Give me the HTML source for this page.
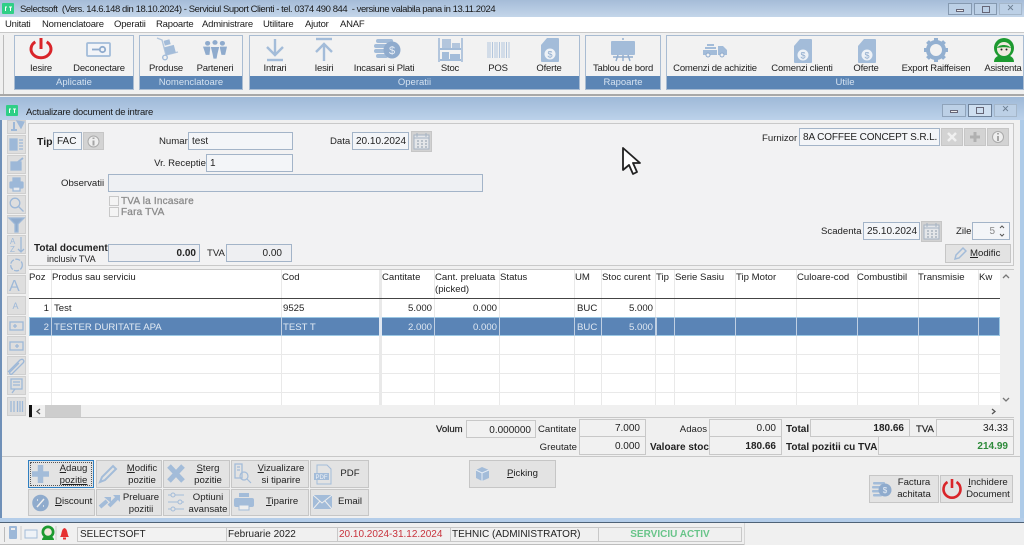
<!DOCTYPE html>
<html><head><meta charset="utf-8"><style>
html,body{margin:0;padding:0;width:1024px;height:545px;overflow:hidden;background:#f0f0f0}
#r{position:relative;width:1024px;height:545px;overflow:hidden;font:9.6px "Liberation Sans",sans-serif;color:#222;filter:blur(.35px)}
#r div,#r svg{position:absolute}
.t{white-space:nowrap;line-height:12px;margin-top:1px}
.st{margin-top:0;font-size:10px}
.k{letter-spacing:-.2px;font-size:9.5px}
.c{text-align:center}.e{text-align:right}
.b{font-weight:bold;font-size:10px}
.g{background:#f2f2f2;border:1px solid #a9bcd2;box-sizing:border-box}
.l{background:#5b85b5;color:#d5e2f0;text-align:center;line-height:14px;height:13px;left:0;right:0;bottom:0;font-size:9.5px}
.f{background:#f3f5f8;border:1px solid #a3b4c8;box-sizing:border-box;line-height:18px;padding:0 3px;white-space:nowrap;color:#222;font-size:10px}
.w{background:#f1f1f1;border:1px solid #c8c8c8;box-sizing:border-box;font-size:10px}
.btn{background:#e3e3e3;border:1px solid #c6c6c6;box-sizing:border-box}
.s{background:#dedede;border:1px solid #cfcfcf;box-sizing:border-box;left:7px;width:19px;height:19px}
.v{background:#e9e9e9;width:1px;top:270px;height:135px}
.h{background:#e9e9e9;height:1px;left:29px;width:971px}
.sv{background:#c0d0e3;width:1px;top:317px;height:19px}
.m{font-size:9.5px;letter-spacing:-.2px;color:#1a1a1a}
u{text-decoration:underline}
</style></head><body><div id="r">

<!-- main title -->
<div style="left:0;top:0;width:1024px;height:17px;background:linear-gradient(#a5bcd8,#c4d6ea)"></div>
<svg style="left:2px;top:3px" width="12" height="11"><rect width="12" height="11" rx="1" fill="#2fcf86"/><path d="M3 4h2M7 4h3M8.500 4v4M3.500 4v4" stroke="#fff" fill="none"/></svg>
<div class="t" style="left:20px;top:3px;color:#1a1a1a;font-size:9.5px;letter-spacing:-.43px">Selectsoft&nbsp; (Vers. 14.6.148 din 18.10.2024) - Serviciul Suport Clienti - tel. 0374 490 844&nbsp; - versiune valabila pana in 13.11.2024</div>
<div style="left:948px;top:3px;width:24px;height:12px;background:#bcd0e6;border:1px solid #8599b0;box-sizing:border-box"></div>
<div style="left:974px;top:3px;width:23px;height:12px;background:#bcd0e6;border:1px solid #8599b0;box-sizing:border-box"></div>
<div style="left:999px;top:3px;width:23px;height:12px;background:#bcd0e6;border:1px solid #a5b7ca;box-sizing:border-box"></div>
<div style="left:956px;top:9px;width:8px;height:3px;background:#eee;border:1px solid #667;box-sizing:border-box"></div>
<div style="left:982px;top:6px;width:8px;height:7px;border:1px solid #667;box-sizing:border-box"></div>
<div class="t c" style="left:999px;top:2px;width:23px;color:#6d7f92">✕</div>

<!-- menu -->
<div style="left:0;top:17px;width:1024px;height:15px;background:#fff"></div>
<div class="t m" style="left:5px;top:18px">Unitati</div>
<div class="t m" style="left:42px;top:18px">Nomenclatoare</div>
<div class="t m" style="left:114px;top:18px">Operatii</div>
<div class="t m" style="left:156px;top:18px">Rapoarte</div>
<div class="t m" style="left:202px;top:18px">Administrare</div>
<div class="t m" style="left:263px;top:18px">Utilitare</div>
<div class="t m" style="left:305px;top:18px">Ajutor</div>
<div class="t m" style="left:340px;top:18px">ANAF</div>

<!-- toolbar -->
<div style="left:0;top:32px;width:1024px;height:64px;background:#f0f0f0;border-top:1px solid #c8c8c8;border-bottom:2px solid #a8a8a8;box-sizing:border-box"></div>
<div style="left:3px;top:35px;width:1px;height:59px;background:#bbb"></div>
<div class="g" style="left:14px;top:35px;width:120px;height:55px"><div class="l">Aplicatie</div></div>
<div class="g" style="left:139px;top:35px;width:104px;height:55px"><div class="l">Nomenclatoare</div></div>
<div class="g" style="left:249px;top:35px;width:331px;height:55px"><div class="l">Operatii</div></div>
<div class="g" style="left:585px;top:35px;width:76px;height:55px"><div class="l">Rapoarte</div></div>
<div class="g" style="left:666px;top:35px;width:358px;height:55px"><div class="l">Utile</div></div>

<div class="t c k" style="left:21px;top:62px;width:40px">Iesire</div>
<div class="t c k" style="left:69px;top:62px;width:60px">Deconectare</div>
<div class="t c k" style="left:143px;top:62px;width:46px">Produse</div>
<div class="t c k" style="left:190px;top:62px;width:50px">Parteneri</div>
<div class="t c k" style="left:255px;top:62px;width:40px">Intrari</div>
<div class="t c k" style="left:304px;top:62px;width:40px">Iesiri</div>
<div class="t c k" style="left:344px;top:62px;width:80px">Incasari si Plati</div>
<div class="t c k" style="left:430px;top:62px;width:40px">Stoc</div>
<div class="t c k" style="left:478px;top:62px;width:40px">POS</div>
<div class="t c k" style="left:529px;top:62px;width:40px">Oferte</div>
<div class="t c k" style="left:588px;top:62px;width:70px">Tablou de bord</div>
<div class="t c k" style="left:665px;top:62px;width:100px">Comenzi de achizitie</div>
<div class="t c k" style="left:762px;top:62px;width:80px">Comenzi clienti</div>
<div class="t c k" style="left:846px;top:62px;width:40px">Oferte</div>
<div class="t c k" style="left:891px;top:62px;width:90px">Export Raiffeisen</div>
<div class="t c k" style="left:978px;top:62px;width:50px">Asistenta</div>

<!-- power -->
<svg style="left:28px;top:36px" width="26" height="26"><path d="M7.300 5.900A10 8.700 0 1 0 18.700 5.900" fill="none" stroke="#d9252a" stroke-width="3"/><path d="M13 2V13" stroke="#d9252a" stroke-width="3"/></svg>
<!-- deconectare -->
<svg style="left:86px;top:40px" width="26" height="18"><rect x="1" y="3" width="23" height="13" rx="1" fill="#f2f4f8" stroke="#a3bcd9" stroke-width="1.800"/><circle cx="16.500" cy="9.500" r="2.700" fill="none" stroke="#8fabcd" stroke-width="1.800"/><path d="M6 9.500h8" stroke="#8fabcd" stroke-width="1.800"/></svg>
<!-- produse -->
<svg style="left:154px;top:37px" width="26" height="25"><path d="M3 1l5 2 4 15 12-3" fill="none" stroke="#b3c6dd" stroke-width="1.400"/><circle cx="11" cy="20.500" r="2.300" fill="none" stroke="#a3bcd9" stroke-width="1.400"/><rect x="11" y="9" width="10" height="8" transform="rotate(-15 16 13)" fill="#a3bcd9"/><rect x="10" y="3" width="6" height="5" transform="rotate(-15 13 5)" fill="#a3bcd9"/></svg>
<!-- parteneri -->
<svg style="left:203px;top:40px" width="24" height="19" viewBox="0 0 26 23" preserveAspectRatio="none" fill="#8fabcd"><circle cx="5" cy="4" r="2.800"/><circle cx="13" cy="3" r="2.800"/><circle cx="21" cy="4" r="2.800"/><path d="M0 8h8l-1 10H3z"/><path d="M18 8h8l-2 10h-4z"/><path d="M8 8h10l-2 9-1 6h-4l-1-6z" stroke="#f2f2f2" stroke-width=".8"/></svg>
<!-- intrari -->
<svg style="left:264px;top:38px" width="22" height="25" fill="none" stroke="#a3bcd9" stroke-width="2.400"><path d="M11 1v15M3 9l8 8 8-8"/><path d="M3 22h16"/></svg>
<!-- iesiri -->
<svg style="left:313px;top:37px" width="22" height="25" fill="none" stroke="#a3bcd9" stroke-width="2.400"><path d="M3 2h16"/><path d="M11 24V8M3 15l8-8 8 8"/></svg>
<!-- incasari -->
<svg style="left:374px;top:38px" width="28" height="23"><g fill="#a3bcd9"><rect x="2" y="1" width="17" height="4" rx="2"/><rect x="0" y="6" width="14" height="4" rx="2"/><rect x="0" y="11" width="12" height="4" rx="2"/><rect x="2" y="16" width="12" height="4" rx="2"/><circle cx="18" cy="12" r="8.500" fill="#8fabcd"/></g><text x="18" y="16" font-size="11" text-anchor="middle" fill="#e9eff6" font-family="Liberation Sans">$</text></svg>
<!-- stoc -->
<svg style="left:438px;top:38px" width="25" height="24"><path d="M1 0v24M24 0v24" stroke="#b3c6dd" stroke-width="2"/><rect x="2" y="10" width="21" height="2" fill="#a3bcd9"/><rect x="2" y="21" width="21" height="2" fill="#a3bcd9"/><rect x="4" y="1" width="9" height="9" fill="#b3c6dd"/><rect x="14" y="5" width="8" height="5" fill="#b3c6dd"/><rect x="4" y="14" width="7" height="7" fill="#a3bcd9"/><rect x="12" y="16" width="10" height="5" fill="#a3bcd9"/></svg>
<!-- pos -->
<svg style="left:487px;top:42px" width="24" height="16" stroke="#b3c6dd"><path d="M1 0v16M3 0v16M5.500 0v16M8 0v16M10 0v16M12.500 0v16M15 0v16M17 0v16M19.500 0v16M22 0v16"/></svg>
<!-- oferte -->
<svg style="left:540px;top:37px" width="20" height="26"><path d="M7 1h11a1 1 0 0 1 1 1v22a1 1 0 0 1-1 1H2a1 1 0 0 1-1-1V8z" fill="#a3bcd9"/><circle cx="10" cy="17" r="5.500" fill="#eef2f7"/><text x="10" y="20.500" font-size="9" text-anchor="middle" fill="#8fabcd" font-family="Liberation Sans">$</text></svg>
<!-- tablou -->
<svg style="left:610px;top:37px" width="26" height="25"><rect x="1" y="4" width="24" height="14" rx="1" fill="#a3bcd9"/><path d="M13 1v2M13 18v6M8 18l-2 6M18 18l2 6M3 20h20" stroke="#8fabcd" stroke-width="1.400"/></svg>
<!-- truck -->
<svg style="left:702px;top:42px" width="26" height="16"><path d="M1 8h14v5H1zM16 4h5l4 4v5h-9z" fill="#a3bcd9"/><rect x="5" y="2" width="7" height="2" fill="#a3bcd9"/><rect x="3" y="5" width="11" height="2" fill="#a3bcd9"/><circle cx="6" cy="13" r="2" fill="#f2f2f2" stroke="#8fabcd"/><circle cx="20" cy="13" r="2" fill="#f2f2f2" stroke="#8fabcd"/></svg>
<!-- comenzi clienti -->
<svg style="left:793px;top:38px" width="20" height="26"><path d="M7 1h11a1 1 0 0 1 1 1v22a1 1 0 0 1-1 1H2a1 1 0 0 1-1-1V8z" fill="#a3bcd9"/><circle cx="10" cy="17" r="5.500" fill="#eef2f7"/><text x="10" y="20.500" font-size="9" text-anchor="middle" fill="#8fabcd" font-family="Liberation Sans">$</text></svg>
<svg style="left:857px;top:38px" width="20" height="26"><path d="M7 1h11a1 1 0 0 1 1 1v22a1 1 0 0 1-1 1H2a1 1 0 0 1-1-1V8z" fill="#a3bcd9"/><circle cx="10" cy="17" r="5.500" fill="#eef2f7"/><text x="10" y="20.500" font-size="9" text-anchor="middle" fill="#8fabcd" font-family="Liberation Sans">$</text></svg>
<!-- gear -->
<svg style="left:923px;top:37px" width="26" height="26" fill="none" stroke="#93b0d1"><circle cx="13" cy="13" r="8" stroke-width="4"/><path d="M13 1v3M13 22v3M1 13h3M22 13h3M4.500 4.500l2.200 2.200M19.300 19.300l2.200 2.200M21.500 4.500l-2.200 2.200M6.700 19.300l-2.200 2.200" stroke-width="4"/></svg>
<!-- asistenta -->
<svg style="left:991px;top:37px" width="26" height="26"><path d="M3 25c0-5 4-7 10-7s10 2 10 7z" fill="#1d9a30"/><circle cx="13" cy="11" r="10" fill="#1d9a30"/><circle cx="13" cy="12" r="7" fill="#f1e9de"/><path d="M6 11c2-4 11-4 14 0-4-1-9-1-14 0z" fill="#1d9a30"/><circle cx="10.500" cy="12.500" r="1" fill="#222"/><circle cx="15.500" cy="12.500" r="1" fill="#222"/></svg>

<!-- background and child window -->
<div style="left:0;top:96px;width:1024px;height:449px;background:#f0f0f0"></div>
<div style="left:0;top:97px;width:1024px;height:426px;background:#b4cde9"></div>
<div style="left:0;top:97px;width:1024px;height:23px;background:linear-gradient(#9fb9d8,#bcd2ea)"></div>
<svg style="left:6px;top:105px" width="12" height="11"><rect width="12" height="11" rx="1" fill="#2fcf86"/><path d="M3 4h2M7 4h3M8.500 4v4M3.500 4v4" stroke="#fff" fill="none"/></svg>
<div class="t" style="left:26px;top:106px;color:#1a1a1a;font-size:9.5px;letter-spacing:-.23px">Actualizare document de intrare</div>
<div style="left:942px;top:104px;width:24px;height:13px;background:#bcd0e6;border:1px solid #8fa3ba;box-sizing:border-box"></div>
<div style="left:968px;top:104px;width:24px;height:13px;background:#cfdff0;border:1px solid #6d8098;box-sizing:border-box"></div>
<div style="left:994px;top:104px;width:23px;height:13px;background:#bcd0e6;border:1px solid #a5b7ca;box-sizing:border-box"></div>
<div style="left:950px;top:110px;width:8px;height:3px;background:#eee;border:1px solid #667;box-sizing:border-box"></div>
<div style="left:976px;top:107px;width:8px;height:7px;border:1px solid #667;box-sizing:border-box"></div>
<div class="t c" style="left:994px;top:103px;width:23px;color:#6d7f92">✕</div>

<!-- client area -->
<div style="left:2px;top:120px;width:1018px;height:398px;background:#f0f0f0"></div>
<div style="left:28px;top:123px;width:986px;height:143px;background:#f2f2f3;border:1px solid #c9c9c9;box-sizing:border-box"></div>
<div style="left:1020px;top:120px;width:4px;height:403px;background:#aecbe8"></div>

<!-- sidebar -->
<div class="s" style="top:120px;height:14px"></div>
<div class="s" style="top:135px"></div><div class="s" style="top:155px"></div><div class="s" style="top:175px"></div><div class="s" style="top:195px"></div><div class="s" style="top:215px"></div><div class="s" style="top:235px"></div><div class="s" style="top:255px"></div><div class="s" style="top:275px"></div><div class="s" style="top:296px"></div><div class="s" style="top:316px"></div><div class="s" style="top:336px"></div><div class="s" style="top:356px"></div><div class="s" style="top:376px"></div><div class="s" style="top:397px"></div>
<svg style="left:7px;top:120px" width="19" height="297" fill="none" stroke="#9db8d8" stroke-width="1.300">
<g transform="translate(0,-8)"><path d="M4 18h6M7 10v8" stroke-width="2"/><path d="M10 9l7 1-3 6z" fill="#9db8d8"/></g>
<g transform="translate(0,15)"><rect x="3" y="4" width="7" height="11" fill="#9db8d8"/><path d="M12 5h4M12 8h4M12 11h4M12 14h4"/></g>
<g transform="translate(0,35)"><rect x="4" y="7" width="10" height="8" fill="#9db8d8"/><path d="M11 7l5-4" stroke-width="2"/></g>
<g transform="translate(0,55)"><rect x="6" y="3" width="7" height="4" fill="#9db8d8"/><rect x="3" y="7" width="13" height="6" rx="1" fill="#9db8d8"/><rect x="6" y="12" width="7" height="4" fill="#e6e9ee"/></g>
<g transform="translate(0,75)"><circle cx="8" cy="8" r="4.800"/><path d="M11.500 11.500l5 5"/></g>
<g transform="translate(0,95)"><path d="M2 3h15l-6 6v8h-3V9z" fill="#8fabcd"/></g>
<g transform="translate(0,115)"><text x="3" y="9" font-size="8" fill="#9db8d8" stroke="none" font-family="Liberation Sans">A</text><text x="3" y="17" font-size="8" fill="#9db8d8" stroke="none" font-family="Liberation Sans">Z</text><path d="M14 2v15M11 14l3 3 3-3"/></g>
<g transform="translate(0,135)"><circle cx="9.500" cy="10" r="5.800" stroke-dasharray="5 1.500"/></g>
<g transform="translate(0,155)"><text x="2" y="16" font-size="16" fill="#9db8d8" stroke="none" font-family="Liberation Sans">A</text></g>
<g transform="translate(0,176)"><text x="5.500" y="13" font-size="9" fill="#9db8d8" stroke="none" font-family="Liberation Sans">A</text></g>
<g transform="translate(0,196)"><rect x="3" y="6" width="13" height="8"/><path d="M6 10h4M8 8v4"/></g>
<g transform="translate(0,216)"><rect x="3" y="6" width="13" height="8"/><path d="M8 10h4M10 8v4"/></g>
<g transform="translate(0,236)"><path d="M1 16L13 4c3-2 5 1 3 3L5 18c-2 1-3-1-2-2L12 7"/></g>
<g transform="translate(0,256)"><rect x="4" y="3" width="11" height="10"/><path d="M6 6h7M6 9h7M8 13l-3 4"/></g>
<g transform="translate(0,277)"><path d="M4 4v11M7 4v11M10.500 4v11M13 4v11M15.500 4v11"/></g>
</svg>

<!-- form -->
<div class="t b" style="left:37px;top:135px;font-size:10.500px">Tip</div>
<div class="f" style="left:53px;top:132px;width:29px;height:18px">FAC</div>
<div class="btn" style="left:83px;top:132px;width:21px;height:18px;background:#d3d3d3"></div>
<svg style="left:87px;top:135px" width="13" height="13"><circle cx="6.500" cy="6.500" r="5.500" fill="#eee" stroke="#aaa"/><path d="M6.500 5.500v5M6.500 2.500v1.500" stroke="#a5a5a5" stroke-width="2"/></svg>
<div class="t" style="left:159px;top:135px">Numar</div>
<div class="f" style="left:188px;top:132px;width:105px;height:18px">test</div>
<div class="t" style="left:330px;top:135px">Data</div>
<div class="f" style="left:352px;top:132px;width:57px;height:18px">20.10.2024</div>
<div class="btn" style="left:411px;top:131px;width:21px;height:21px;background:#d2d2d2"></div>
<svg style="left:413px;top:133px" width="17" height="17" fill="none" stroke="#a5b3c2"><rect x="1" y="2" width="15" height="14" fill="#e4e6e9"/><path d="M4 0v4M13 0v4M1 5h15"/><path d="M4 8h2M8 8h2M12 8h2M4 11h2M8 11h2M12 11h2M4 14h2M8 14h2M12 14h2" stroke="#8d9aa9"/></svg>

<div class="t e" style="left:140px;top:157px;width:66px">Vr. Receptie</div>
<div class="f" style="left:206px;top:154px;width:87px;height:18px">1</div>
<div class="t" style="left:61px;top:177px">Observatii</div>
<div class="f" style="left:108px;top:174px;width:375px;height:18px;background:#eef0f3"></div>
<div style="left:109px;top:196px;width:8px;height:8px;background:#f4f4f4;border:1px solid #c8c8c8"></div>
<div style="left:109px;top:207px;width:8px;height:8px;background:#f4f4f4;border:1px solid #c8c8c8"></div>
<div class="t" style="left:121px;top:195px;color:#8c8c8c;-webkit-text-stroke:.3px #8c8c8c;letter-spacing:.2px;font-size:10px">TVA la Incasare</div>
<div class="t" style="left:121px;top:206px;color:#8c8c8c;-webkit-text-stroke:.3px #8c8c8c;letter-spacing:.2px;font-size:10px">Fara TVA</div>
<div class="t b" style="left:34px;top:242px">Total document</div>
<div class="t" style="left:47px;top:252px;font-size:9px">inclusiv TVA</div>
<div class="f b e" style="left:108px;top:244px;width:92px;height:18px;background:#eeeff2">0.00</div>
<div class="t" style="left:207px;top:247px">TVA</div>
<div class="f e" style="left:226px;top:244px;width:66px;height:18px;padding-right:9px;background:#eeeff2">0.00</div>

<div class="t" style="left:762px;top:132px">Furnizor</div>
<div class="f" style="left:799px;top:128px;width:141px;height:18px;letter-spacing:-.12px;overflow:hidden">8A COFFEE CONCEPT S.R.L.</div>
<div class="btn" style="left:941px;top:128px;width:22px;height:18px;background:#d3d3d3"></div>
<div class="btn" style="left:964px;top:128px;width:22px;height:18px;background:#d3d3d3"></div>
<div class="btn" style="left:987px;top:128px;width:22px;height:18px;background:#d3d3d3"></div>
<svg style="left:941px;top:128px" width="68" height="18"><path d="M7 5l8 8M15 5l-8 8" stroke="#f0f0f0" stroke-width="2.500"/><path d="M34 4v10M29 9h10" stroke="#b0b0b0" stroke-width="3"/><circle cx="57" cy="9" r="5.500" fill="#eee" stroke="#aaa"/><path d="M57 8v5M57 5v1.500" stroke="#a5a5a5" stroke-width="2"/></svg>
<div class="t" style="left:821px;top:225px">Scadenta</div>
<div class="f" style="left:863px;top:222px;width:57px;height:18px">25.10.2024</div>
<div class="btn" style="left:921px;top:221px;width:21px;height:21px;background:#d2d2d2"></div>
<svg style="left:923px;top:223px" width="17" height="17" fill="none" stroke="#a5b3c2"><rect x="1" y="2" width="15" height="14" fill="#e4e6e9"/><path d="M4 0v4M13 0v4M1 5h15"/><path d="M4 8h2M8 8h2M12 8h2M4 11h2M8 11h2M12 11h2M4 14h2M8 14h2M12 14h2" stroke="#8d9aa9"/></svg>
<div class="t" style="left:956px;top:225px">Zile</div>
<div class="f e" style="left:972px;top:222px;width:38px;height:18px;padding-right:14px;color:#888">5</div>
<svg style="left:998px;top:224px" width="9" height="14" fill="none" stroke="#555"><path d="M2 4l2-2 2 2M2 10l2 2 2-2"/></svg>
<div class="btn" style="left:945px;top:244px;width:66px;height:19px"></div>
<svg style="left:953px;top:246px" width="14" height="15" fill="none" stroke="#a3bcd9" stroke-width="1.500"><path d="M2 13l1-4 7-7 3 3-7 7z"/></svg>
<div class="t" style="left:970px;top:247px"><u>M</u>odific</div>

<!-- grid -->
<div style="left:29px;top:270px;width:971px;height:135px;background:#fff"></div>
<div style="left:29px;top:269px;width:985px;height:1px;background:#c8c8c8"></div>
<div style="left:1000px;top:270px;width:14px;height:147px;background:#f0f0f0"></div>
<div style="left:29px;top:405px;width:985px;height:13px;background:#f0f0f0;border-bottom:1px solid #c8c8c8;box-sizing:border-box"></div>
<div class="v" style="left:51px"></div><div class="v" style="left:281px"></div><div class="v" style="left:379px;width:3px"></div><div class="v" style="left:434px"></div><div class="v" style="left:499px"></div><div class="v" style="left:574px"></div><div class="v" style="left:601px"></div><div class="v" style="left:655px"></div><div class="v" style="left:674px"></div><div class="v" style="left:735px"></div><div class="v" style="left:796px"></div><div class="v" style="left:857px"></div><div class="v" style="left:918px"></div><div class="v" style="left:978px"></div>
<div style="left:29px;top:298px;width:971px;height:1px;background:#444"></div>
<div class="h" style="top:354px"></div><div class="h" style="top:373px"></div><div class="h" style="top:392px"></div>
<div style="left:29px;top:317px;width:971px;height:19px;background:#5a84b6;border:1px solid #9cc8e4;box-sizing:border-box"></div>
<div class="sv" style="left:51px"></div><div class="sv" style="left:281px"></div><div class="sv" style="left:379px;width:3px;background:#dfe7f1"></div><div class="sv" style="left:434px"></div><div class="sv" style="left:499px"></div><div class="sv" style="left:574px"></div><div class="sv" style="left:601px"></div><div class="sv" style="left:655px;width:2px"></div><div class="sv" style="left:674px"></div><div class="sv" style="left:735px"></div><div class="sv" style="left:796px"></div><div class="sv" style="left:857px"></div><div class="sv" style="left:918px"></div><div class="sv" style="left:978px"></div>

<div class="t" style="left:29px;top:271px">Poz</div>
<div class="t" style="left:52px;top:271px">Produs sau serviciu</div>
<div class="t" style="left:282px;top:271px">Cod</div>
<div class="t" style="left:382px;top:271px">Cantitate</div>
<div class="t" style="left:435px;top:271px">Cant. preluata</div>
<div class="t" style="left:435px;top:283px">(picked)</div>
<div class="t" style="left:500px;top:271px">Status</div>
<div class="t" style="left:575px;top:271px">UM</div>
<div class="t" style="left:602px;top:271px">Stoc curent</div>
<div class="t" style="left:656px;top:271px">Tip</div>
<div class="t" style="left:675px;top:271px">Serie Sasiu</div>
<div class="t" style="left:736px;top:271px">Tip Motor</div>
<div class="t" style="left:797px;top:271px">Culoare-cod</div>
<div class="t" style="left:857px;top:271px">Combustibil</div>
<div class="t" style="left:918px;top:271px">Transmisie</div>
<div class="t" style="left:979px;top:271px">Kw</div>

<div class="t e" style="left:29px;top:302px;width:20px">1</div>
<div class="t" style="left:54px;top:302px">Test</div>
<div class="t" style="left:283px;top:302px">9525</div>
<div class="t e" style="left:382px;top:302px;width:50px">5.000</div>
<div class="t e" style="left:435px;top:302px;width:62px">0.000</div>
<div class="t" style="left:577px;top:302px">BUC</div>
<div class="t e" style="left:602px;top:302px;width:51px">5.000</div>

<div class="t e" style="left:29px;top:321px;width:20px;color:#dfe7f1">2</div>
<div class="t" style="left:54px;top:321px;color:#e3ebf4">TESTER DURITATE APA</div>
<div class="t" style="left:283px;top:321px;color:#e3ebf4">TEST T</div>
<div class="t e" style="left:382px;top:321px;width:50px;color:#dfe7f1">2.000</div>
<div class="t e" style="left:435px;top:321px;width:62px;color:#dfe7f1">0.000</div>
<div class="t" style="left:577px;top:321px;color:#dfe7f1">BUC</div>
<div class="t e" style="left:602px;top:321px;width:51px;color:#dfe7f1">5.000</div>

<div style="left:29px;top:405px;width:3px;height:12px;background:#111"></div>
<div style="left:45px;top:405px;width:36px;height:12px;background:#cdcdcd"></div>
<svg style="left:0;top:0" width="1024" height="545" fill="none" stroke="#555" stroke-width="1.300"><path d="M40 409l-3 2.500 3 2.500M992 409l3 2.500-3 2.500"/><path d="M1003 278l3-3 3 3M1003 398l3 3 3-3" stroke="#777"/></svg>

<!-- totals -->
<div class="t" style="left:436px;top:423px;-webkit-text-stroke:.2px #222">Volum</div>
<div class="w e" style="left:466px;top:420px;width:70px;height:18px;line-height:19px;padding-right:4px">0.000000</div>
<div class="t" style="left:538px;top:423px">Cantitate</div>
<div class="t e" style="left:530px;top:441px;width:47px">Greutate</div>
<div class="w e" style="left:579px;top:419px;width:67px;height:18px;line-height:18px;padding-right:5px">7.000</div>
<div class="w e" style="left:579px;top:436px;width:67px;height:19px;line-height:19px;padding-right:5px">0.000</div>
<div class="t e" style="left:670px;top:423px;width:37px">Adaos</div>
<div class="t b" style="left:650px;top:441px">Valoare stoc</div>
<div class="w e" style="left:709px;top:419px;width:73px;height:18px;line-height:18px;padding-right:5px">0.00</div>
<div class="w e b" style="left:709px;top:436px;width:73px;height:19px;line-height:19px;padding-right:5px">180.66</div>
<div class="t b" style="left:786px;top:423px">Total</div>
<div class="w e b" style="left:810px;top:419px;width:100px;height:18px;line-height:18px;padding-right:5px">180.66</div>
<div class="t" style="left:916px;top:423px;-webkit-text-stroke:.2px #222">TVA</div>
<div class="w e" style="left:936px;top:419px;width:78px;height:18px;line-height:18px;padding-right:5px">34.33</div>
<div class="t b" style="left:786px;top:441px">Total pozitii cu TVA</div>
<div class="w e b" style="left:878px;top:436px;width:136px;height:19px;line-height:19px;padding-right:5px;color:#2d8a3a">214.99</div>
<div style="left:2px;top:456px;width:1018px;height:1px;background:#c8c8c8"></div>

<!-- buttons -->
<div class="btn" style="left:28px;top:460px;width:66px;height:28px;border:1px solid #2f7fc1"></div>
<div style="left:30px;top:462px;width:62px;height:24px;border:1px dotted #555;box-sizing:border-box"></div>
<div class="btn" style="left:96px;top:460px;width:66px;height:28px"></div>
<div class="btn" style="left:163px;top:460px;width:67px;height:28px"></div>
<div class="btn" style="left:231px;top:460px;width:78px;height:28px"></div>
<div class="btn" style="left:310px;top:460px;width:59px;height:28px"></div>
<div class="btn" style="left:28px;top:489px;width:67px;height:27px"></div>
<div class="btn" style="left:96px;top:489px;width:66px;height:27px"></div>
<div class="btn" style="left:163px;top:489px;width:67px;height:27px"></div>
<div class="btn" style="left:231px;top:489px;width:78px;height:27px"></div>
<div class="btn" style="left:310px;top:489px;width:59px;height:27px"></div>
<div class="btn" style="left:469px;top:460px;width:87px;height:28px"></div>
<div class="btn" style="left:869px;top:475px;width:70px;height:28px"></div>
<div class="btn" style="left:940px;top:475px;width:73px;height:28px"></div>

<div class="t c" style="left:55px;top:462px;width:37px;line-height:11.500px"><u>A</u>daug<br><u>pozitie</u></div>
<div class="t c" style="left:120px;top:462px;width:44px;line-height:11.500px"><u>M</u>odific<br>pozitie</div>
<div class="t c" style="left:186px;top:462px;width:44px;line-height:11.500px"><u>S</u>terg<br>pozitie</div>
<div class="t c" style="left:253px;top:462px;width:56px;line-height:11.500px"><u>V</u>izualizare<br>si tiparire</div>
<div class="t c" style="left:335px;top:467px;width:30px">PDF</div>
<div class="t" style="left:55px;top:495px"><u>D</u>iscount</div>
<div class="t c" style="left:117px;top:491px;width:48px;line-height:11.500px">Preluare<br>pozitii</div>
<div class="t c" style="left:186px;top:491px;width:44px;line-height:11.500px">Optiuni<br>avansate</div>
<div class="t" style="left:266px;top:495px"><u>T</u>iparire</div>
<div class="t" style="left:338px;top:495px">Email</div>
<div class="t" style="left:507px;top:467px"><u>P</u>icking</div>
<div class="t c" style="left:889px;top:476px;width:50px;line-height:11.500px">Factura<br>achitata</div>
<div class="t c" style="left:963px;top:476px;width:50px;line-height:11.500px"><u>I</u>nchidere<br>Document</div>

<svg style="left:30px;top:462px" width="340" height="54" fill="none" stroke="#a3bcd9">
<path d="M10.500 3v18M2 12h17" stroke-width="5.500"/>
<path d="M70 20l2-5 11-11 3 3-11 11z" stroke-width="2"/>
<path d="M139 4l14 15M153 4l-14 15" stroke-width="5"/>
<path d="M205 2h7v14h-7zM207 5h3M207 8h3" stroke-width="1.300"/><circle cx="214" cy="14" r="4" stroke-width="1.200"/><path d="M217 17l4 4" stroke-width="1.200"/>
<path d="M287 3h10l4 4v15h-14z" stroke-width="1"/><rect x="284" y="11" width="15" height="7" fill="#a3bcd9" stroke="none"/><text x="291.500" y="17" font-size="6" text-anchor="middle" fill="#f0f3f7" stroke="none" font-family="Liberation Sans">PDF</text>
<circle cx="10.500" cy="41" r="6.500" fill="#8fabcd" stroke="#8fabcd" stroke-width="3.500"/><path d="M7 45l7-8M7 38h1M13 44h1" stroke="#eee" stroke-width="1.500"/>
<path d="M70 45l7-6M79 44l8-8" stroke-width="4"/><path d="M74 35h7v6zM83 33h7v7z" fill="#a3bcd9" stroke="none"/>
<path d="M138 33h16M138 40h16M138 47h16" stroke-width="1"/><circle cx="143" cy="33" r="2" fill="#e3e3e3" stroke-width="1"/><circle cx="150" cy="40" r="2" fill="#e3e3e3" stroke-width="1"/><circle cx="143" cy="47" r="2" fill="#e3e3e3" stroke-width="1"/>
<rect x="209" y="31" width="10" height="4" fill="#a3bcd9" stroke="none"/><rect x="204" y="36" width="20" height="9" rx="2" fill="#a3bcd9" stroke="none"/><rect x="209" y="43" width="10" height="5" fill="#eee"/>
<rect x="283" y="33" width="19" height="14" fill="#a3bcd9" stroke="none"/><path d="M283 33l9 8 10-8M283 47l7-8M302 47l-7-8" stroke="#eee"/>
</svg>
<svg style="left:474px;top:465px" width="18" height="18"><path d="M8 2l7 3v8l-7 3-6-3V5z" fill="#a3bcd9"/><path d="M2 5l6 3 7-3M8 8v8" stroke="#e6edf5" fill="none"/></svg>
<svg style="left:872px;top:481px" width="20" height="17"><g fill="#a3bcd9"><rect x="1" y="1" width="12" height="2.500" rx="1"/><rect x="0" y="5" width="10" height="2.500" rx="1"/><rect x="0" y="9" width="9" height="2.500" rx="1"/><rect x="1" y="13" width="9" height="2.500" rx="1"/><circle cx="13" cy="9" r="6.500" fill="#8fabcd"/></g><text x="13" y="12" font-size="8" text-anchor="middle" fill="#e9eff6" font-family="Liberation Sans">$</text></svg>
<svg style="left:941px;top:476px" width="22" height="24"><path d="M6.500 6A8.500 8.500 0 1 0 15.500 6" fill="none" stroke="#d9252a" stroke-width="2.600"/><path d="M11 3v9" stroke="#d9252a" stroke-width="2.600"/></svg>

<!-- blue bottom -->
<div style="left:0;top:518px;width:1024px;height:5px;background:#b4cde9;border-bottom:1px solid #4e6277;box-sizing:border-box"></div>
<div style="left:0;top:120px;width:2px;height:398px;background:#6f90b8"></div>

<!-- status bar -->
<div style="left:4px;top:527px;width:1px;height:15px;background:#bbb"></div>
<svg style="left:8px;top:525px" width="68" height="16"><rect x="1" y="1" width="8" height="13" rx="1" fill="#9db8d8"/><rect x="3" y="3" width="4" height="2" fill="#eee"/><rect x="17" y="5" width="12" height="8" fill="#eef2f7" stroke="#a3bcd9"/><circle cx="40" cy="7" r="6.500" fill="#1d9a30"/><path d="M34 15c0-3 3-4 6-4s6 1 6 4z" fill="#1d9a30"/><circle cx="40" cy="7" r="3.800" fill="#f1e9de"/><path d="M52 12c2-2 1-8 4.500-9 3.500 1 2.500 7 4.500 9z" fill="#e63030"/><rect x="55" y="12.500" width="3" height="2" fill="#e63030"/><path d="M13 1v14M48 1v14" stroke="#ccc"/></svg>
<div class="t st" style="left:77px;top:527px;width:147px;height:13px;border:1px solid #c8c8c8;border-width:1px 0 1px 1px;padding-left:2px;line-height:13px;background:#f2f2f2">SELECTSOFT</div>
<div class="t st" style="left:226px;top:527px;width:110px;height:13px;border:1px solid #c8c8c8;border-width:1px 0 1px 1px;padding-left:1px;line-height:13px">Februarie 2022</div>
<div class="t st" style="left:337px;top:527px;width:112px;height:13px;border:1px solid #c8c8c8;border-width:1px 0 1px 1px;padding-left:1px;line-height:13px;color:#c8323c">20.10.2024-31.12.2024</div>
<div class="t st" style="left:450px;top:527px;width:147px;height:13px;border:1px solid #c8c8c8;border-width:1px 0 1px 1px;padding-left:1px;line-height:13px">TEHNIC (ADMINISTRATOR)</div>
<div class="t st b c" style="left:598px;top:527px;width:142px;height:13px;border:1px solid #c8c8c8;border-width:1px;line-height:13px;color:#68c489">SERVICIU ACTIV</div>
<div style="left:0;top:544px;width:745px;height:1px;background:#bdbdbd"></div>
<div style="left:744px;top:523px;width:1px;height:22px;background:#d5d5d5"></div>

<!-- cursor -->
<svg style="left:621px;top:146px" width="22" height="32"><path d="M2 2v22l6-5 4 9 4-2-4-9h7z" fill="#fff" stroke="#222" stroke-width="1.800" stroke-linejoin="round"/></svg>

</div></body></html>
